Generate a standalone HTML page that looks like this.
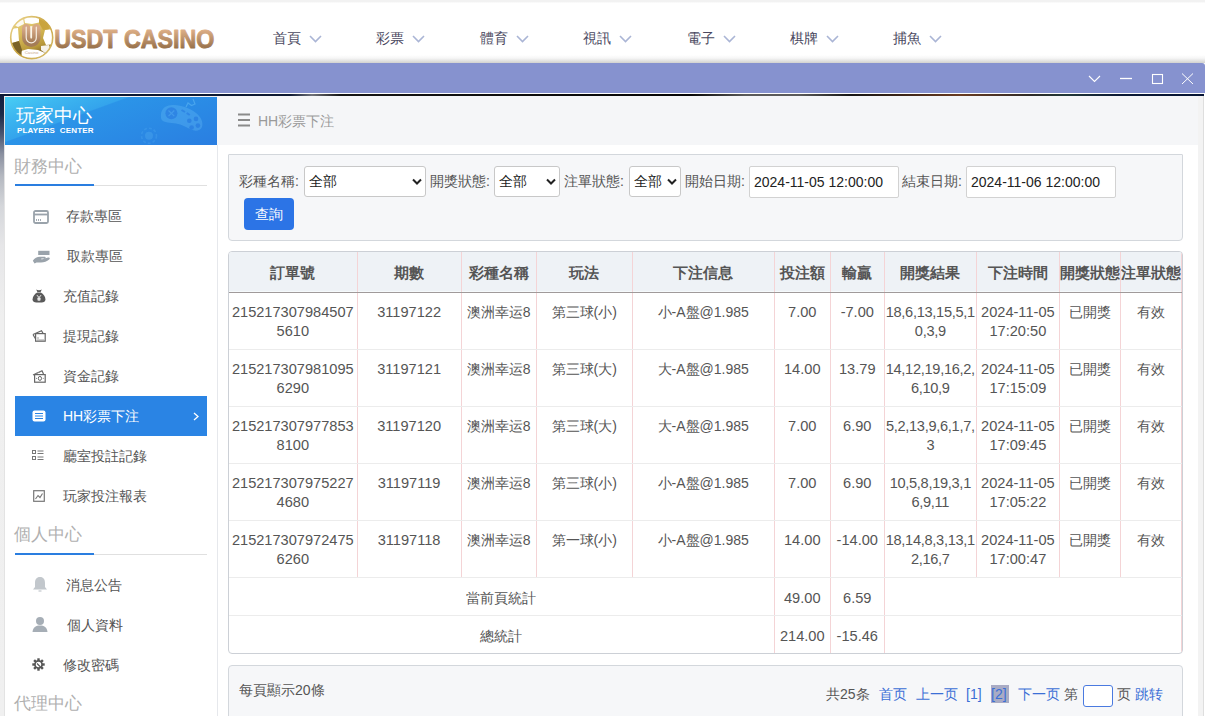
<!DOCTYPE html>
<html><head><meta charset="utf-8">
<style>
*{box-sizing:border-box;margin:0;padding:0}
html,body{width:1205px;height:716px;overflow:hidden;background:#fff;font-family:"Liberation Sans",sans-serif;color:#555}
.abs{position:absolute}
#topstrip{left:0;top:0;width:1205px;height:3px;background:linear-gradient(#f2f2f2,#f2f2f2 60%,#fff)}
#hdrshadow{left:0;top:55px;width:1205px;height:8px;background:linear-gradient(#fff,#f6f6f6 40%,#d2d2cf)}
.nav{top:29px;font-size:14px;color:#4a4860;line-height:18px;white-space:nowrap}
.nav svg{position:absolute;top:6px}
#purple{left:0;top:63px;width:1205px;height:30px;background:#8692cf;border-top-right-radius:3px}
#wline{left:0;top:93px;width:1205px;height:1px;background:#fff}
#dline{left:0;top:94px;width:1204px;height:2px;background:linear-gradient(90deg,#0c1a36 0,#0e1a34 290px,#70727a 312px,#151515 340px,#060606 690px,#5a5a5a 745px,#5a5a5a 800px,#161616 850px,#3a2418 900px,#6a3c22 960px,#2e2a28 1030px,#223838 1065px,#0c1a36 1120px,#061535 1204px)}
#lstrip{left:0;top:96px;width:4px;height:620px;background:linear-gradient(#122040 0px,#1c2a48 18px,#4a5570 38px,#8a90a0 58px,#b4b8c0 80px,#d4d6da 110px,#e6e6e8 150px,#efefef 220px,#f0f0f0)}
#sidebar{left:4px;top:96px;width:214px;height:620px;background:#fff;border-left:1px solid #e3e3e3;border-right:1px solid #e3e3e3;border-top:1px solid #f4f4f4}
#sbhead{left:0;top:0;width:212px;height:48px;background:linear-gradient(160deg,#48cef4 0%,#3cb6f0 18%,#34a4ec 35.5%,#2b94e8 36.5%,#2a8ae5 65%,#2a7ee1 100%)}
.sec{font-size:17px;color:#b0b0b0;line-height:20px;white-space:nowrap}
.secline{height:1px;background:#e0e0e0;width:192px;left:11px}
.secblue{height:2px;background:#2a7ee0;width:79px;left:11px}
.item{left:15px;width:192px;height:40px;font-size:14px;color:#555;line-height:40px;white-space:nowrap}
.item .t{position:absolute;top:0}
.item svg{position:absolute}
.item.act{background:#2a84e4;color:#fff}
#main{left:217px;top:96px;width:981px;height:620px;background:#fff}
#mhead{left:0;top:0;width:981px;height:49px;background:#f5f6f8}
#rstrip{left:1198px;top:96px;width:7px;height:620px;background:linear-gradient(90deg,#f3f3f3 0,#f3f3f3 5px,#dedede 5px,#dedede 6px,#fff 6px)}
.box{background:#f6f7f9;border:1px solid #d3d7dc;border-radius:4px}
.lbl{font-size:14px;color:#555;line-height:18px;white-space:nowrap}
.sel{background:#fff;border:1px solid #c8c8c8;border-radius:3px;height:31px;font-size:14px;color:#222;line-height:29px;padding-left:4px;white-space:nowrap}
.sel svg{position:absolute;top:11px}
.inp{background:#fff;border:1px solid #d2d2d2;border-radius:2px;height:31.5px;font-size:14px;color:#222;line-height:30px;padding-left:4px;white-space:nowrap}
#btn{left:244px;top:198px;width:50px;height:32px;background:#2c74e6;border-radius:4px;color:#fff;font-size:14px;line-height:32px;text-align:center}
table{border-collapse:collapse;table-layout:fixed;font-size:14px;color:#555}
#tbl{left:228px;top:251px;width:955px;height:403px;border:1px solid #ccd0d6;border-radius:4px;overflow:hidden;background:#fff}
td,th{text-align:center;vertical-align:top;border-right:1px solid #f4d4d6;border-bottom:1px solid #ececec;padding:0;line-height:19px;overflow:hidden;white-space:nowrap}
th{background:#eef2f6;font-weight:bold;font-size:15px;color:#555;height:40px;vertical-align:middle;padding-top:2px;border-bottom:1px solid #a09a9a;box-shadow:inset 0 -1px 0 #f6fafc}
tr.r td{height:57px;padding-top:10px}
tr.s td{height:38px;line-height:33px;padding-top:4px}
tr.s1 td{height:37px}

td.n{font-size:14.6px}
td.res{letter-spacing:-0.3px}
#pg{left:228px;top:665px;width:955px;height:70px}
.pl{font-size:14px;line-height:18px;white-space:nowrap;color:#555}
.blue{color:#3b6fd6}
</style></head><body>
<div id="topstrip" class="abs"></div>
<div id="hdrshadow" class="abs"></div>
<!-- logo -->
<svg class="abs" style="left:8px;top:14px" width="48" height="48" viewBox="0 0 48 48">
  <defs>
    <linearGradient id="gball" x1="0.2" y1="0" x2="0.6" y2="1">
      <stop offset="0" stop-color="#e9d48a"/><stop offset="0.4" stop-color="#d8bb58"/><stop offset="0.75" stop-color="#b8983a"/><stop offset="1" stop-color="#6e5420"/>
    </linearGradient>
    <linearGradient id="gring" x1="0" y1="0" x2="1" y2="1">
      <stop offset="0" stop-color="#f0dc98"/><stop offset="0.5" stop-color="#c9a441"/><stop offset="1" stop-color="#d9c070"/>
    </linearGradient>
    <linearGradient id="gU" x1="0" y1="0" x2="0" y2="1">
      <stop offset="0" stop-color="#d6a886"/><stop offset="1" stop-color="#a47c56"/>
    </linearGradient>
    <clipPath id="cb"><circle cx="23.7" cy="23.6" r="21"/></clipPath>
  </defs>
  <circle cx="23.7" cy="23.6" r="21.2" fill="url(#gball)"/><ellipse cx="23.3" cy="22" rx="8" ry="10" fill="#f8f0dc"/>
  <g clip-path="url(#cb)" fill="#fff">
    <path d="M16 3 L32 2.5 L31 8.5 L24 10 L17 9 Z"/>
    <path d="M2 15 L10 14 L11 27 L4 29 L1 24 Z"/>
    <path d="M7 5.5 L15 4 L16 10 L10 13 L6 11 Z" opacity="0.9"/>
    <path d="M37 16 L45 15 L47 30 L38 31 L35 24 Z"/>
    <path d="M13 37 L20 35 L30 36 L37 39 L34 47 L15 47 Z"/>
    <path d="M33 32 L41 31 L43 37 L37 39 L33 36 Z" opacity="0.9"/>
  </g>
  <g clip-path="url(#cb)">
    <path d="M31 5 L40 6 L41 15 L35 16 L31 9 Z" fill="#c9a43e"/>
    <path d="M4 29 L11 27 L14 36 L13 41 L6 38 Z" fill="#7a6228"/>
  </g>
  <circle cx="23.7" cy="23.6" r="21" fill="none" stroke="url(#gring)" stroke-width="1.6"/>
  <path d="M18.2 14.3 V23.75 A5.05 5.05 0 0 0 28.3 23.75 V14.3" fill="none" stroke="url(#gU)" stroke-width="8.4" stroke-linecap="round"/>
  <path d="M23.25 13 V23.5" stroke="#fbf6ea" stroke-width="1.3"/>
  <path d="M18.2 13.2 V23.75 A5.05 5.05 0 0 0 28.3 23.75 V13.2" fill="none" stroke="#f6eee2" stroke-width="1.2" stroke-linecap="round"/>
  <text x="23.5" y="39.5" font-size="4.4" text-anchor="middle" fill="#c9a78a" font-family="Liberation Sans">Casino</text>
</svg>
<svg class="abs" style="left:52px;top:24px" width="170" height="30" viewBox="0 0 170 30">
  <defs><linearGradient id="gtxt" x1="0" y1="0.2" x2="0" y2="0.85">
    <stop offset="0" stop-color="#dcae86"/><stop offset="1" stop-color="#98714a"/></linearGradient></defs>
  <text x="2.3" y="23.5" font-family="Liberation Sans" font-weight="bold" font-size="25" fill="url(#gtxt)" stroke="url(#gtxt)" stroke-width="0.9" stroke-linejoin="round" textLength="160" lengthAdjust="spacingAndGlyphs">USDT CASINO</text>
</svg>
<!-- nav -->
<div class="abs nav" style="left:273px">首頁<svg style="left:36px" width="13" height="8" viewBox="0 0 13 8"><path d="M1 1 L6.5 6.5 L12 1" fill="none" stroke="#aab5d5" stroke-width="1.6"/></svg></div>
<div class="abs nav" style="left:376px">彩票<svg style="left:36px" width="13" height="8" viewBox="0 0 13 8"><path d="M1 1 L6.5 6.5 L12 1" fill="none" stroke="#aab5d5" stroke-width="1.6"/></svg></div>
<div class="abs nav" style="left:480px">體育<svg style="left:36px" width="13" height="8" viewBox="0 0 13 8"><path d="M1 1 L6.5 6.5 L12 1" fill="none" stroke="#aab5d5" stroke-width="1.6"/></svg></div>
<div class="abs nav" style="left:583px">視訊<svg style="left:36px" width="13" height="8" viewBox="0 0 13 8"><path d="M1 1 L6.5 6.5 L12 1" fill="none" stroke="#aab5d5" stroke-width="1.6"/></svg></div>
<div class="abs nav" style="left:687px">電子<svg style="left:36px" width="13" height="8" viewBox="0 0 13 8"><path d="M1 1 L6.5 6.5 L12 1" fill="none" stroke="#aab5d5" stroke-width="1.6"/></svg></div>
<div class="abs nav" style="left:790px">棋牌<svg style="left:36px" width="13" height="8" viewBox="0 0 13 8"><path d="M1 1 L6.5 6.5 L12 1" fill="none" stroke="#aab5d5" stroke-width="1.6"/></svg></div>
<div class="abs nav" style="left:893px">捕魚<svg style="left:36px" width="13" height="8" viewBox="0 0 13 8"><path d="M1 1 L6.5 6.5 L12 1" fill="none" stroke="#aab5d5" stroke-width="1.6"/></svg></div>

<div id="purple" class="abs"></div>
<svg class="abs" style="left:1086px;top:70px" width="112" height="18" viewBox="0 0 112 18">
  <path d="M3 6 L8.5 11.5 L14 6" fill="none" stroke="#fff" stroke-width="1.1"/>
  <path d="M34 8.5 H46" stroke="#fff" stroke-width="1.3"/>
  <rect x="66.5" y="4.5" width="10" height="9" fill="none" stroke="#fff" stroke-width="1.1"/>
  <path d="M96 3.5 L107 14 M107 3.5 L96 14" stroke="#fff" stroke-width="1"/>
</svg>
<div id="wline" class="abs"></div>
<div id="dline" class="abs"></div>
<div id="lstrip" class="abs"></div>

<!-- SIDEBAR -->
<div id="sidebar" class="abs"></div>
<div id="sbhead" class="abs" style="left:5px;top:97px"></div>
<svg class="abs" style="left:140px;top:97px" width="77" height="48" viewBox="0 0 77 48">
  <path d="M21 17 C22 10 28 7.5 34 8 C42 8.5 50 11 56 16 C61 20 63.5 25 62 30 C60.5 34 55 34.5 51 32.5 C46 30 42 27.5 36 26.5 C30 25.5 24 26 21.5 22.5 C20.8 21 20.8 19 21 17 Z" fill="#6cc4f8" opacity="0.3"/>
  <circle cx="31.4" cy="16.3" r="6" fill="#2a7fe2" opacity="0.8"/>
  <path d="M28.5 13.5 L34.3 19.1 M34.3 13.5 L28.5 19.1" stroke="#4aa2ee" stroke-width="1.3" opacity="0.7"/>
  <path d="M41.5 13 L45 15 M46.7 16 L49.7 18" stroke="#2a7fe2" stroke-width="2" opacity="0.75"/>
  <g fill="#2a7fe2" opacity="0.8"><circle cx="49.3" cy="23.7" r="2.3"/><circle cx="56" cy="21.9" r="2.3"/><circle cx="51.6" cy="30.5" r="2.3"/><circle cx="57.9" cy="28.6" r="2.3"/></g>
  <path d="M46 10 L48 6 L51.5 8.5 L55 7 L53 2" fill="none" stroke="#6cc4f8" stroke-width="1.2" opacity="0.45"/>
  <circle cx="9" cy="38.7" r="7.5" fill="none" stroke="#6cc4f8" stroke-width="1.6" stroke-dasharray="3 2" opacity="0.18"/>
  <circle cx="9" cy="38.7" r="4" fill="#6cc4f8" opacity="0.22"/>
</svg>
<div class="abs" style="left:16px;top:105px;font-size:19px;color:#fff;line-height:22px;white-space:nowrap">玩家中心</div>
<div class="abs" style="left:17px;top:126px;font-size:8px;font-weight:bold;color:#fff;line-height:10px;letter-spacing:0.15px;white-space:nowrap">PLAYERS&nbsp; CENTER</div>

<div class="abs sec" style="left:14px;top:157px">財務中心</div>
<div class="abs secline" style="left:15px;top:185px;width:192px"></div>
<div class="abs secblue" style="left:15px;top:184px;width:79px"></div>

<div class="abs item" style="top:196px"><svg style="left:18px;top:14px" width="16" height="14" viewBox="0 0 16 14"><rect x="1" y="1" width="14" height="12" rx="1.5" fill="none" stroke="#9aa3ab" stroke-width="1.8"/><path d="M1 4.5H15" stroke="#9aa3ab" stroke-width="1.8"/><path d="M3.5 9v2M5.5 9v2M7.5 9v2" stroke="#9aa3ab" stroke-width="0.9"/></svg><span class="t" style="left:51px">存款專區</span></div>
<div class="abs item" style="top:236px"><svg style="left:17px;top:14px" width="19" height="14" viewBox="0 0 19 14"><rect x="6.2" y="0.8" width="11.3" height="4.2" fill="#9aa3ab"/><path d="M0.8 10.8 C2.5 8.2 5 6.8 8 6.8 H12.8 C14 6.8 14 8.6 12.8 8.6 H9.2 L9.6 9.6 L16 7.6 C17.8 7.1 18.4 8.4 17.2 9.4 C15 11.2 12 12.4 9 12.4 H4.5 L2.6 13.6 Z" fill="#9aa3ab"/></svg><span class="t" style="left:52px">取款專區</span></div>
<div class="abs item" style="top:276px"><svg style="left:17px;top:13px" width="14" height="14" viewBox="0 0 14 14"><path d="M4.2 0.6 C5.5 1.4 8.5 1.4 9.8 0.6 L8.6 3 H5.4 Z" fill="#5a5a5a"/><path d="M5.2 3.4 H8.8 C11.5 5 13.4 7.5 13.4 10.2 C13.4 12.8 11.5 13.6 7 13.6 C2.5 13.6 0.6 12.8 0.6 10.2 C0.6 7.5 2.5 5 5.2 3.4 Z" fill="#5a5a5a"/><path d="M5 6.2 L7 8.6 L9 6.2 M7 8.6 V12 M5.3 9.3 H8.7 M5.3 10.8 H8.7" fill="none" stroke="#fff" stroke-width="0.95"/></svg><span class="t" style="left:48px">充值記錄</span></div>
<div class="abs item" style="top:316px"><svg style="left:17px;top:14px" width="14" height="12" viewBox="0 0 14 12"><path d="M1 4.5 L9.5 0.8 L11.2 3.6" fill="none" stroke="#666" stroke-width="1.2"/><rect x="3.6" y="3.6" width="9.6" height="7.6" fill="#fff" stroke="#666" stroke-width="1.2"/><path d="M1 4.5 L3.6 9" stroke="#666" stroke-width="1.2"/><path d="M5 8 H7 M5 10 H12" stroke="#888" stroke-width="0.8"/></svg><span class="t" style="left:48px">提現記錄</span></div>
<div class="abs item" style="top:356px"><svg style="left:17px;top:14px" width="14" height="13" viewBox="0 0 14 13"><path d="M1 5 L10 0.8 L11.5 4" fill="none" stroke="#666" stroke-width="1.2"/><path d="M4 3.5 L8.5 1.8" stroke="#888" stroke-width="0.9"/><rect x="2.6" y="4.6" width="10.6" height="7.6" fill="#fff" stroke="#666" stroke-width="1.2"/><ellipse cx="7.9" cy="8.4" rx="1.6" ry="2" fill="none" stroke="#666" stroke-width="1"/><path d="M4.2 8.4 H5 M10.8 8.4 H11.6" stroke="#666" stroke-width="1"/></svg><span class="t" style="left:48px">資金記錄</span></div>
<div class="abs item act" style="top:396px"><svg style="left:17px;top:14px" width="14" height="12" viewBox="0 0 14 12"><rect x="0.5" y="0.5" width="13" height="11" rx="2" fill="#fff"/><path d="M3 3.5H11M3 6H11M3 8.5H11" stroke="#2a84e4" stroke-width="1"/></svg><span class="t" style="left:48px">HH彩票下注</span><svg style="left:178px;top:16px" width="6" height="9" viewBox="0 0 6 9"><path d="M1 1 L5 4.5 L1 8" fill="none" stroke="#fff" stroke-width="1.3"/></svg></div>
<div class="abs item" style="top:436px"><svg style="left:17px;top:14px" width="12" height="11" viewBox="0 0 12 11"><rect x="0.5" y="0.5" width="3" height="3" fill="none" stroke="#777" stroke-width="1"/><rect x="0.5" y="6.5" width="3" height="3" fill="none" stroke="#777" stroke-width="1"/><path d="M5.5 1H11.5M5.5 3.5H11.5M5.5 7H11.5M5.5 9.5H11.5" stroke="#777" stroke-width="1"/></svg><span class="t" style="left:48px">廳室投註記錄</span></div>
<div class="abs item" style="top:476px"><svg style="left:18px;top:14px" width="12" height="12" viewBox="0 0 12 12"><rect x="0.7" y="0.7" width="10.6" height="10.6" fill="none" stroke="#777" stroke-width="1.2"/><path d="M2.5 9 L5 5.5 L7 7.5 L9.5 3.5" fill="none" stroke="#777" stroke-width="1.1"/></svg><span class="t" style="left:48px">玩家投注報表</span></div>

<div class="abs sec" style="left:14px;top:525px">個人中心</div>
<div class="abs secline" style="left:15px;top:554px;width:192px"></div>
<div class="abs secblue" style="left:15px;top:553px;width:79px"></div>

<div class="abs item" style="top:565px"><svg style="left:17px;top:11px" width="16" height="17" viewBox="0 0 16 17"><path d="M8 1 C4.5 1 3 3.5 3 7 V11 L1 13.5 H15 L13 11 V7 C13 3.5 11.5 1 8 1 Z" fill="#c2c7cc"/><path d="M6.5 15 H9.5" stroke="#c2c7cc" stroke-width="1.2"/></svg><span class="t" style="left:51px">消息公告</span></div>
<div class="abs item" style="top:605px"><svg style="left:17px;top:11px" width="16" height="17" viewBox="0 0 16 17"><circle cx="8" cy="5" r="4" fill="#a6aeb6"/><path d="M0.5 16 C1 11 4 9.5 8 9.5 C12 9.5 15 11 15.5 16 Z" fill="#a6aeb6"/></svg><span class="t" style="left:52px">個人資料</span></div>
<div class="abs item" style="top:645px"><svg style="left:17px;top:13px" width="13" height="13" viewBox="0 0 13 13"><g fill="#555"><circle cx="6.5" cy="6.5" r="4.4"/><rect x="5.3" y="0.3" width="2.4" height="3" transform="rotate(0 6.5 6.5)"/><rect x="5.3" y="0.3" width="2.4" height="3" transform="rotate(45 6.5 6.5)"/><rect x="5.3" y="0.3" width="2.4" height="3" transform="rotate(90 6.5 6.5)"/><rect x="5.3" y="0.3" width="2.4" height="3" transform="rotate(135 6.5 6.5)"/><rect x="5.3" y="0.3" width="2.4" height="3" transform="rotate(180 6.5 6.5)"/><rect x="5.3" y="0.3" width="2.4" height="3" transform="rotate(225 6.5 6.5)"/><rect x="5.3" y="0.3" width="2.4" height="3" transform="rotate(270 6.5 6.5)"/><rect x="5.3" y="0.3" width="2.4" height="3" transform="rotate(315 6.5 6.5)"/></g><circle cx="6.5" cy="6.5" r="2.7" fill="#fff"/><path d="M5 5.5 L8.5 9" stroke="#555" stroke-width="1.1"/></svg><span class="t" style="left:48px">修改密碼</span></div>

<div class="abs sec" style="left:14px;top:694px">代理中心</div>

<!-- MAIN -->
<div id="main" class="abs"></div>
<div id="mhead" class="abs" style="left:217px;top:96px;width:981px;height:49px"></div>
<svg class="abs" style="left:237px;top:113px" width="14" height="14" viewBox="0 0 14 14"><path d="M1 1.5H13M1 7H13M1 12.5H13" stroke="#8a8a8a" stroke-width="1.8"/></svg>
<div class="abs" style="left:258px;top:112px;font-size:14px;color:#9a9a9a;line-height:18px;white-space:nowrap">HH彩票下注</div>

<div class="abs box" style="left:228px;top:154px;width:955px;height:87px;border-radius:1px 1px 4px 4px"></div>
<div class="abs lbl" style="left:239px;top:172px">彩種名稱:</div>
<div class="abs sel" style="left:304px;top:166px;width:122px">全部<svg style="left:107px" width="10" height="8" viewBox="0 0 10 8"><path d="M1 1.5 L5 5.5 L9 1.5" fill="none" stroke="#222" stroke-width="2"/></svg></div>
<div class="abs lbl" style="left:430px;top:172px">開獎狀態:</div>
<div class="abs sel" style="left:494px;top:166px;width:66px">全部<svg style="left:51px" width="10" height="8" viewBox="0 0 10 8"><path d="M1 1.5 L5 5.5 L9 1.5" fill="none" stroke="#222" stroke-width="2"/></svg></div>
<div class="abs lbl" style="left:564px;top:172px">注單狀態:</div>
<div class="abs sel" style="left:629px;top:166px;width:52px">全部<svg style="left:37px" width="10" height="8" viewBox="0 0 10 8"><path d="M1 1.5 L5 5.5 L9 1.5" fill="none" stroke="#222" stroke-width="2"/></svg></div>
<div class="abs lbl" style="left:685px;top:172px">開始日期:</div>
<div class="abs inp" style="left:749px;top:166px;width:150px">2024-11-05 12:00:00</div>
<div class="abs lbl" style="left:902px;top:172px">結束日期:</div>
<div class="abs inp" style="left:966px;top:166px;width:150px">2024-11-06 12:00:00</div>
<div id="btn" class="abs">查詢</div>

<div id="tbl" class="abs">
<table style="width:953px">
<colgroup><col style="width:128px"><col style="width:104px"><col style="width:75px"><col style="width:96px"><col style="width:142px"><col style="width:56px"><col style="width:54px"><col style="width:92px"><col style="width:83px"><col style="width:61px"><col style="width:61px"></colgroup>
<tr><th>訂單號</th><th>期數</th><th>彩種名稱</th><th>玩法</th><th>下注信息</th><th>投注額</th><th>輸贏</th><th>開獎結果</th><th>下注時間</th><th>開獎狀態</th><th>注單狀態</th></tr>
<tr class="r"><td class="n">215217307984507<br>5610</td><td class="n">31197122</td><td>澳洲幸运8</td><td>第三球(小)</td><td>小-A盤@1.985</td><td class="n">7.00</td><td class="n">-7.00</td><td class="n res">18,6,13,15,5,1<br>0,3,9</td><td class="n">2024-11-05<br>17:20:50</td><td>已開獎</td><td>有效</td></tr>
<tr class="r"><td class="n">215217307981095<br>6290</td><td class="n">31197121</td><td>澳洲幸运8</td><td>第三球(大)</td><td>大-A盤@1.985</td><td class="n">14.00</td><td class="n">13.79</td><td class="n res">14,12,19,16,2,<br>6,10,9</td><td class="n">2024-11-05<br>17:15:09</td><td>已開獎</td><td>有效</td></tr>
<tr class="r"><td class="n">215217307977853<br>8100</td><td class="n">31197120</td><td>澳洲幸运8</td><td>第三球(大)</td><td>大-A盤@1.985</td><td class="n">7.00</td><td class="n">6.90</td><td class="n res">5,2,13,9,6,1,7,<br>3</td><td class="n">2024-11-05<br>17:09:45</td><td>已開獎</td><td>有效</td></tr>
<tr class="r"><td class="n">215217307975227<br>4680</td><td class="n">31197119</td><td>澳洲幸运8</td><td>第三球(小)</td><td>小-A盤@1.985</td><td class="n">7.00</td><td class="n">6.90</td><td class="n res">10,5,8,19,3,1<br>6,9,11</td><td class="n">2024-11-05<br>17:05:22</td><td>已開獎</td><td>有效</td></tr>
<tr class="r"><td class="n">215217307972475<br>6260</td><td class="n">31197118</td><td>澳洲幸运8</td><td>第一球(小)</td><td>小-A盤@1.985</td><td class="n">14.00</td><td class="n">-14.00</td><td class="n res">18,14,8,3,13,1<br>2,16,7</td><td class="n">2024-11-05<br>17:00:47</td><td>已開獎</td><td>有效</td></tr>
<tr class="s s1"><td colspan="5">當前頁統計</td><td class="n">49.00</td><td class="n">6.59</td><td colspan="4"></td></tr>
<tr class="s"><td colspan="5" style="border-bottom:none">總統計</td><td class="n" style="border-bottom:none">214.00</td><td class="n" style="border-bottom:none">-15.46</td><td colspan="4" style="border-bottom:none"></td></tr>
</table>
</div>

<div id="pg" class="abs box"></div>
<div class="abs pl" style="left:239px;top:681px">每頁顯示20條</div>
<div class="abs pl" style="left:826px;top:685px">共25条</div>
<div class="abs pl blue" style="left:879px;top:685px">首页</div>
<div class="abs pl blue" style="left:916px;top:685px">上一页</div>
<div class="abs pl blue" style="left:966px;top:685px">[1]</div>
<div class="abs" style="left:991px;top:685px;width:18px;height:18px;background:#a9abc4"></div>
<div class="abs pl blue" style="left:991px;top:685px">[2]</div>
<div class="abs pl blue" style="left:1018px;top:685px">下一页</div>
<div class="abs pl" style="left:1064px;top:685px">第</div>
<div class="abs" style="left:1083px;top:685px;width:30px;height:22px;background:#fff;border:1px solid #4a7ae0;border-radius:3px"></div>
<div class="abs pl" style="left:1117px;top:685px">页</div>
<div class="abs pl blue" style="left:1135px;top:685px">跳转</div>
<div id="rstrip" class="abs"></div>
<div class="abs" style="left:217px;top:145px;width:1px;height:571px;background:#e6e8ec"></div>
</body></html>
